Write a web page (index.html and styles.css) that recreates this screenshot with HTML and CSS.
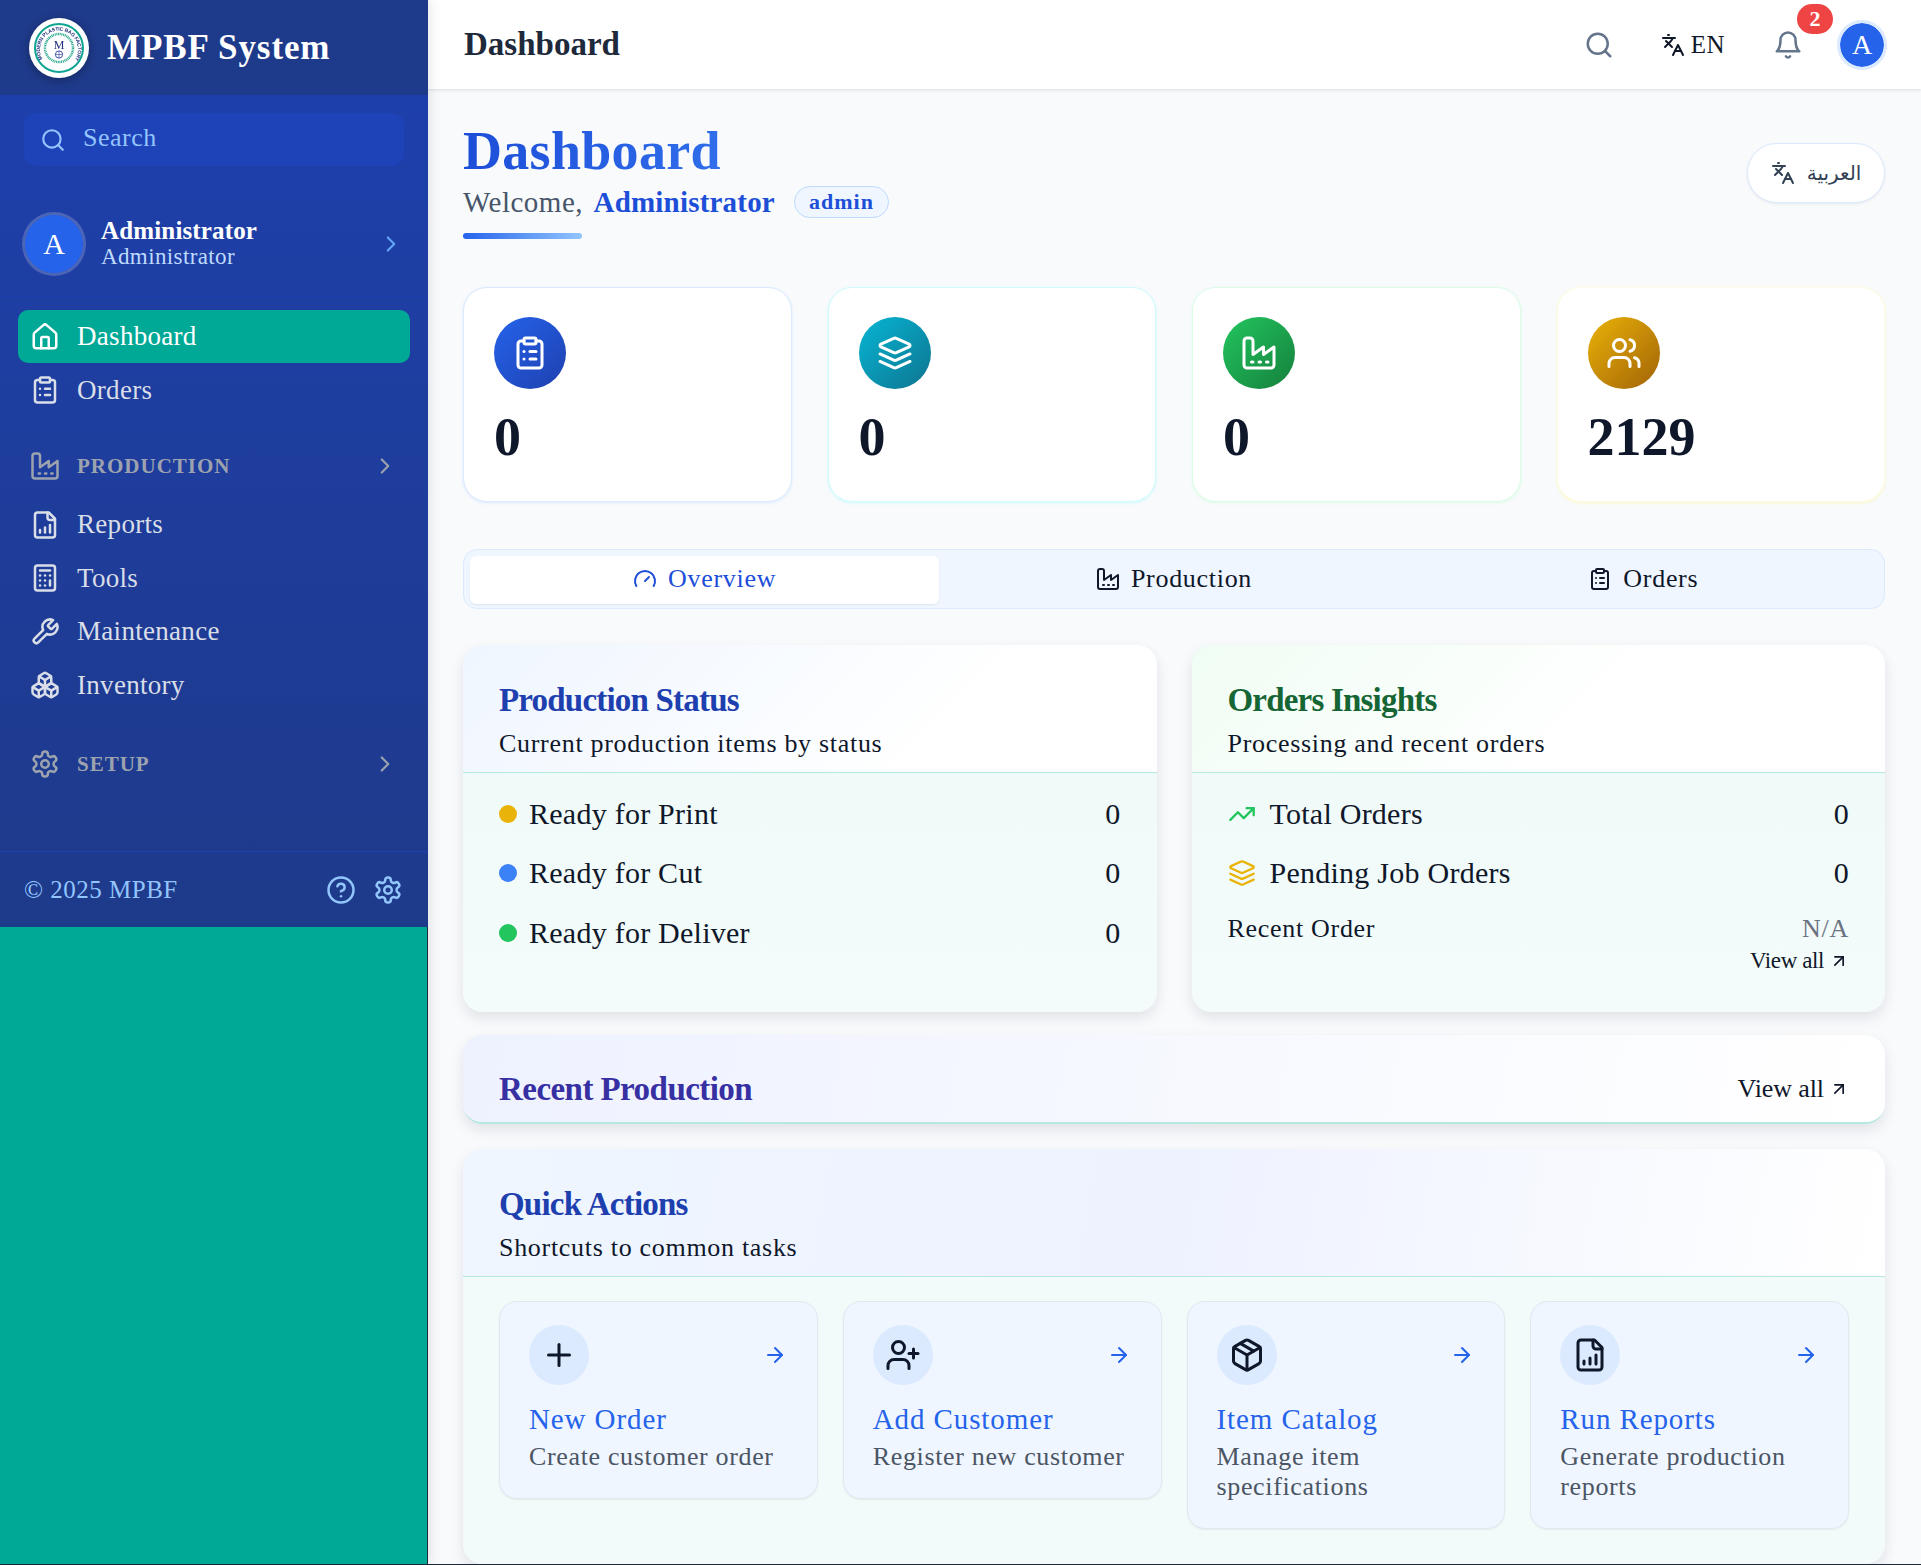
FILE: index.html
```html
<!DOCTYPE html>
<html lang="en">
<head>
  <meta charset="UTF-8">
  <title>Dashboard - MPBF System</title>
  <link rel="stylesheet" href="styles.css">
</head>
<body>
  <svg class="icon-defs" xmlns="http://www.w3.org/2000/svg">
    <symbol id="i-search" viewBox="0 0 24 24"><circle cx="11" cy="11" r="8"/><path d="m21 21-4.3-4.3"/></symbol>
    <symbol id="i-chevron" viewBox="0 0 24 24"><path d="m9 18 6-6-6-6"/></symbol>
    <symbol id="i-house" viewBox="0 0 24 24"><path d="M15 21v-8a1 1 0 0 0-1-1h-4a1 1 0 0 0-1 1v8"/><path d="M3 10a2 2 0 0 1 .709-1.528l7-5.999a2 2 0 0 1 2.582 0l7 5.999A2 2 0 0 1 21 10v9a2 2 0 0 1-2 2H5a2 2 0 0 1-2-2z"/></symbol>
    <symbol id="i-clipboard" viewBox="0 0 24 24"><rect width="8" height="4" x="8" y="2" rx="1" ry="1"/><path d="M16 4h2a2 2 0 0 1 2 2v14a2 2 0 0 1-2 2H6a2 2 0 0 1-2-2V6a2 2 0 0 1 2-2h2"/><path d="M12 11h4"/><path d="M12 16h4"/><path d="M8 11h.01"/><path d="M8 16h.01"/></symbol>
    <symbol id="i-factory" viewBox="0 0 24 24"><path d="M2 20a2 2 0 0 0 2 2h16a2 2 0 0 0 2-2V8l-7 5V8l-7 5V4a2 2 0 0 0-2-2H4a2 2 0 0 0-2 2Z"/><path d="M17 18h1"/><path d="M12 18h1"/><path d="M7 18h1"/></symbol>
    <symbol id="i-report" viewBox="0 0 24 24"><path d="M15 2H6a2 2 0 0 0-2 2v16a2 2 0 0 0 2 2h12a2 2 0 0 0 2-2V7Z"/><path d="M14 2v4a2 2 0 0 0 2 2h4"/><path d="M8 18v-2"/><path d="M12 18v-4"/><path d="M16 18v-6"/></symbol>
    <symbol id="i-calc" viewBox="0 0 24 24"><rect width="16" height="20" x="4" y="2" rx="2"/><path d="M8 6h8"/><path d="M16 14v4"/><path d="M16 10h.01"/><path d="M12 10h.01"/><path d="M8 10h.01"/><path d="M12 14h.01"/><path d="M8 14h.01"/><path d="M12 18h.01"/><path d="M8 18h.01"/></symbol>
    <symbol id="i-wrench" viewBox="0 0 24 24"><path d="M14.7 6.3a1 1 0 0 0 0 1.4l1.6 1.6a1 1 0 0 0 1.4 0l3.77-3.77a6 6 0 0 1-7.94 7.94l-6.91 6.91a2.12 2.12 0 0 1-3-3l6.91-6.91a6 6 0 0 1 7.94-7.94l-3.76 3.76z"/></symbol>
    <symbol id="i-boxes" viewBox="0 0 24 24"><path d="M2.97 12.92A2 2 0 0 0 2 14.63v3.24a2 2 0 0 0 .97 1.71l3 1.8a2 2 0 0 0 2.06 0L12 19v-5.5l-5-3-4.03 2.42Z"/><path d="m7 16.5-4.74-2.85"/><path d="m7 16.5 5-3"/><path d="M7 16.5v5.17"/><path d="M12 13.5V19l3.97 2.38a2 2 0 0 0 2.06 0l3-1.8a2 2 0 0 0 .97-1.71v-3.24a2 2 0 0 0-.97-1.71L17 10.5l-5 3Z"/><path d="m17 16.5-5-3"/><path d="m17 16.5 4.74-2.85"/><path d="M17 16.5v5.17"/><path d="M7.97 4.42A2 2 0 0 0 7 6.13v4.37l5 3 5-3V6.13a2 2 0 0 0-.97-1.71l-3-1.8a2 2 0 0 0-2.06 0l-3 1.8Z"/><path d="M12 8 7.26 5.15"/><path d="m12 8 4.74-2.85"/><path d="M12 13.5V8"/></symbol>
    <symbol id="i-settings" viewBox="0 0 24 24"><path d="M12.22 2h-.44a2 2 0 0 0-2 2v.18a2 2 0 0 1-1 1.73l-.43.25a2 2 0 0 1-2 0l-.15-.08a2 2 0 0 0-2.73.73l-.22.38a2 2 0 0 0 .73 2.73l.15.1a2 2 0 0 1 1 1.72v.51a2 2 0 0 1-1 1.74l-.15.09a2 2 0 0 0-.73 2.73l.22.38a2 2 0 0 0 2.73.73l.15-.08a2 2 0 0 1 2 0l.43.25a2 2 0 0 1 1 1.73V20a2 2 0 0 0 2 2h.44a2 2 0 0 0 2-2v-.18a2 2 0 0 1 1-1.73l.43-.25a2 2 0 0 1 2 0l.15.08a2 2 0 0 0 2.73-.73l.22-.39a2 2 0 0 0-.73-2.73l-.15-.08a2 2 0 0 1-1-1.74v-.5a2 2 0 0 1 1-1.74l.15-.09a2 2 0 0 0 .73-2.73l-.22-.38a2 2 0 0 0-2.73-.73l-.15.08a2 2 0 0 1-2 0l-.43-.25a2 2 0 0 1-1-1.73V4a2 2 0 0 0-2-2z"/><circle cx="12" cy="12" r="3"/></symbol>
    <symbol id="i-help" viewBox="0 0 24 24"><circle cx="12" cy="12" r="10"/><path d="M9.09 9a3 3 0 0 1 5.83 1c0 2-3 3-3 3"/><path d="M12 17h.01"/></symbol>
    <symbol id="i-lang" viewBox="0 0 24 24"><path d="m5 8 6 6"/><path d="m4 14 6-6 2-3"/><path d="M2 5h12"/><path d="M7 2h1"/><path d="m22 22-5-10-5 10"/><path d="M14 18h6"/></symbol>
    <symbol id="i-bell" viewBox="0 0 24 24"><path d="M6 8a6 6 0 0 1 12 0c0 7 3 9 3 9H3s3-2 3-9"/><path d="M10.3 21a1.94 1.94 0 0 0 3.4 0"/></symbol>
    <symbol id="i-layers" viewBox="0 0 24 24"><path d="m12.83 2.18a2 2 0 0 0-1.66 0L2.6 6.08a1 1 0 0 0 0 1.83l8.58 3.91a2 2 0 0 0 1.66 0l8.58-3.9a1 1 0 0 0 0-1.83Z"/><path d="m22 17.65-9.17 4.16a2 2 0 0 1-1.66 0L2 17.65"/><path d="m22 12.65-9.17 4.16a2 2 0 0 1-1.66 0L2 12.65"/></symbol>
    <symbol id="i-users" viewBox="0 0 24 24"><path d="M16 21v-2a4 4 0 0 0-4-4H6a4 4 0 0 0-4 4v2"/><circle cx="9" cy="7" r="4"/><path d="M22 21v-2a4 4 0 0 0-3-3.87"/><path d="M16 3.13a4 4 0 0 1 0 7.75"/></symbol>
    <symbol id="i-gauge" viewBox="0 0 24 24"><path d="m12 14 4-4"/><path d="M3.34 19a10 10 0 1 1 17.32 0"/></symbol>
    <symbol id="i-trend" viewBox="0 0 24 24"><path d="M22 7 13.5 15.5 8.5 10.5 2 17"/><path d="M16 7h6v6"/></symbol>
    <symbol id="i-upright" viewBox="0 0 24 24"><path d="M7 7h10v10"/><path d="M7 17 17 7"/></symbol>
    <symbol id="i-plus" viewBox="0 0 24 24"><path d="M5 12h14"/><path d="M12 5v14"/></symbol>
    <symbol id="i-userplus" viewBox="0 0 24 24"><path d="M16 21v-2a4 4 0 0 0-4-4H6a4 4 0 0 0-4 4v2"/><circle cx="9" cy="7" r="4"/><path d="M19 8v6"/><path d="M22 11h-6"/></symbol>
    <symbol id="i-package" viewBox="0 0 24 24"><path d="m7.5 4.27 9 5.15"/><path d="M21 8a2 2 0 0 0-1-1.73l-7-4a2 2 0 0 0-2 0l-7 4A2 2 0 0 0 3 8v8a2 2 0 0 0 1 1.73l7 4a2 2 0 0 0 2 0l7-4A2 2 0 0 0 21 16Z"/><path d="m3.3 7 8.7 5 8.7-5"/><path d="M12 22V12"/></symbol>
    <symbol id="i-arrow" viewBox="0 0 24 24"><path d="M5 12h14"/><path d="m12 5 7 7-7 7"/></symbol>
  </svg>

  <div class="app">
    <aside class="sidebar">
      <div class="sidebar-inner">
        <div class="brand">
          <svg class="logo" viewBox="0 0 60 60">
            <circle cx="30" cy="30" r="30" fill="#fff"/>
            <circle cx="30" cy="30" r="24" fill="none" stroke="#0fa593" stroke-width="2"/>
            <circle cx="30" cy="30" r="14" fill="none" stroke="#2aa98f" stroke-width="2.5" stroke-dasharray="1 .7"/>
            <defs><path id="logoArc" d="M13.5 41a19 19 0 1 1 33 0"/></defs>
            <text class="logo-ring"><textPath href="#logoArc" textLength="80" lengthAdjust="spacing">MODERN PLASTIC BAG FACTORY</textPath></text>
            <text class="logo-m" x="30" y="31" text-anchor="middle">M</text>
            <circle cx="30" cy="36.5" r="3.6" fill="none" stroke="#2c3e9e" stroke-width=".9"/>
            <path d="M26.4 36.5h7.2M30 32.9v7.2" stroke="#2c3e9e" stroke-width=".6"/>
          </svg>
          <span class="brand-name">MPBF System</span>
        </div>

        <div class="side-search">
          <svg class="ico ico-26"><use href="#i-search"/></svg>
          <span>Search</span>
        </div>

        <div class="side-user">
          <div class="side-avatar">A</div>
          <div class="side-user-text">
            <div class="side-user-name">Administrator</div>
            <div class="side-user-role">Administrator</div>
          </div>
          <svg class="ico ico-26 side-user-chev"><use href="#i-chevron"/></svg>
        </div>

        <nav class="side-nav">
          <a class="nav-item active"><svg class="ico ico-30"><use href="#i-house"/></svg>Dashboard</a>
          <a class="nav-item"><svg class="ico ico-30"><use href="#i-clipboard"/></svg>Orders</a>
          <a class="nav-item nav-group"><svg class="ico ico-30"><use href="#i-factory"/></svg><span>PRODUCTION</span><svg class="ico ico-26 nav-chev"><use href="#i-chevron"/></svg></a>
          <a class="nav-item"><svg class="ico ico-30"><use href="#i-report"/></svg>Reports</a>
          <a class="nav-item"><svg class="ico ico-30"><use href="#i-calc"/></svg>Tools</a>
          <a class="nav-item"><svg class="ico ico-30"><use href="#i-wrench"/></svg>Maintenance</a>
          <a class="nav-item"><svg class="ico ico-30"><use href="#i-boxes"/></svg>Inventory</a>
          <a class="nav-item nav-group"><svg class="ico ico-30"><use href="#i-settings"/></svg><span>SETUP</span><svg class="ico ico-26 nav-chev"><use href="#i-chevron"/></svg></a>
        </nav>

        <div class="side-foot">
          <span>© 2025 MPBF</span>
          <div class="side-foot-icons">
            <svg class="ico ico-30"><use href="#i-help"/></svg>
            <svg class="ico ico-30"><use href="#i-settings"/></svg>
          </div>
        </div>
      </div>
    </aside>

    <div class="main">
      <header class="topbar">
        <div class="topbar-title">Dashboard</div>
        <div class="topbar-right">
          <svg class="ico ico-30 top-search"><use href="#i-search"/></svg>
          <div class="top-lang"><svg class="ico ico-24"><use href="#i-lang"/></svg>EN</div>
          <div class="top-bell"><svg class="ico ico-30"><use href="#i-bell"/></svg><span class="bell-badge">2</span></div>
          <div class="top-avatar">A</div>
        </div>
      </header>

      <main class="content">
        <div class="page-head">
          <div>
            <h1 class="page-title">Dashboard</h1>
            <div class="welcome">Welcome, <b>Administrator</b><span class="role-badge">admin</span></div>
            <div class="title-bar"></div>
          </div>
          <button class="lang-pill"><svg class="ico ico-24"><use href="#i-lang"/></svg><span class="arabic">العربية</span></button>
        </div>

        <section class="stats">
          <div class="stat stat-blue"><div class="stat-icon"><svg class="ico ico-36"><use href="#i-clipboard"/></svg></div><div class="stat-value">0</div></div>
          <div class="stat stat-cyan"><div class="stat-icon"><svg class="ico ico-36"><use href="#i-layers"/></svg></div><div class="stat-value">0</div></div>
          <div class="stat stat-green"><div class="stat-icon"><svg class="ico ico-36"><use href="#i-factory"/></svg></div><div class="stat-value">0</div></div>
          <div class="stat stat-amber"><div class="stat-icon"><svg class="ico ico-36"><use href="#i-users"/></svg></div><div class="stat-value">2129</div></div>
        </section>

        <div class="tabs">
          <div class="tab active"><svg class="ico ico-24"><use href="#i-gauge"/></svg>Overview</div>
          <div class="tab"><svg class="ico ico-24"><use href="#i-factory"/></svg>Production</div>
          <div class="tab"><svg class="ico ico-24"><use href="#i-clipboard"/></svg>Orders</div>
        </div>

        <section class="two-col">
          <div class="card">
            <div class="card-head head-blue">
              <h3 class="card-title title-blue">Production Status</h3>
              <p class="card-sub">Current production items by status</p>
            </div>
            <div class="card-body">
              <div class="stat-row"><span class="row-label"><i class="dot dot-amber"></i>Ready for Print</span><span>0</span></div>
              <div class="stat-row"><span class="row-label"><i class="dot dot-blue"></i>Ready for Cut</span><span>0</span></div>
              <div class="stat-row"><span class="row-label"><i class="dot dot-green"></i>Ready for Deliver</span><span>0</span></div>
            </div>
          </div>

          <div class="card">
            <div class="card-head head-green">
              <h3 class="card-title title-green">Orders Insights</h3>
              <p class="card-sub">Processing and recent orders</p>
            </div>
            <div class="card-body">
              <div class="stat-row"><span class="row-label"><svg class="ico ico-28 c-green"><use href="#i-trend"/></svg>Total Orders</span><span>0</span></div>
              <div class="stat-row"><span class="row-label"><svg class="ico ico-28 c-amber"><use href="#i-layers"/></svg>Pending Job Orders</span><span>0</span></div>
              <div class="recent-row"><span>Recent Order</span><span class="muted">N/A</span></div>
              <div class="view-all view-small">View all <svg class="ico ico-20"><use href="#i-upright"/></svg></div>
            </div>
          </div>
        </section>

        <section class="card recent-card">
          <div class="recent-head">
            <h3 class="card-title title-indigo">Recent Production</h3>
            <div class="view-all">View all <svg class="ico ico-20"><use href="#i-upright"/></svg></div>
          </div>
        </section>

        <section class="card quick-card">
          <div class="card-head head-blue2">
            <h3 class="card-title title-blue">Quick Actions</h3>
            <p class="card-sub">Shortcuts to common tasks</p>
          </div>
          <div class="quick-body">
            <a class="quick">
              <div class="quick-top"><span class="quick-icon"><svg class="ico ico-36"><use href="#i-plus"/></svg></span><svg class="ico ico-24 quick-arrow"><use href="#i-arrow"/></svg></div>
              <div class="quick-title">New Order</div>
              <div class="quick-desc">Create customer order</div>
            </a>
            <a class="quick">
              <div class="quick-top"><span class="quick-icon"><svg class="ico ico-36"><use href="#i-userplus"/></svg></span><svg class="ico ico-24 quick-arrow"><use href="#i-arrow"/></svg></div>
              <div class="quick-title">Add Customer</div>
              <div class="quick-desc">Register new customer</div>
            </a>
            <a class="quick">
              <div class="quick-top"><span class="quick-icon"><svg class="ico ico-36"><use href="#i-package"/></svg></span><svg class="ico ico-24 quick-arrow"><use href="#i-arrow"/></svg></div>
              <div class="quick-title">Item Catalog</div>
              <div class="quick-desc">Manage item specifications</div>
            </a>
            <a class="quick">
              <div class="quick-top"><span class="quick-icon"><svg class="ico ico-36"><use href="#i-report"/></svg></span><svg class="ico ico-24 quick-arrow"><use href="#i-arrow"/></svg></div>
              <div class="quick-title">Run Reports</div>
              <div class="quick-desc">Generate production reports</div>
            </a>
          </div>
        </section>
      </main>
    </div>
  </div>
</body>
</html>
```

FILE: styles.css
```css
* {
  box-sizing: border-box;
}

html, body {
  margin: 0;
  height: 100%;
  overflow: hidden;
}

body {
  font-family: "Liberation Serif", "Noto Sans", serif;
  font-size: 26px;
  letter-spacing: 0.5px;
  color: #0f172a;
  background: #1f2937;
}

h1, h3, p {
  margin: 0;
}

.icon-defs {
  display: none;
}

.ico {
  fill: none;
  stroke: currentColor;
  stroke-width: 2;
  stroke-linecap: round;
  stroke-linejoin: round;
  flex: none;
}
.ico-20 { width: 20px; height: 20px; }
.ico-24 { width: 24px; height: 24px; }
.ico-26 { width: 26px; height: 26px; }
.ico-28 { width: 28px; height: 28px; }
.ico-30 { width: 30px; height: 30px; }
.ico-36 { width: 36px; height: 36px; }

.app {
  display: flex;
  height: 1564px;
  background: #f8fafc;
}

/* sidebar */
.sidebar {
  width: 428px;
  flex: none;
  background: #00a896;
  border-right: 1px solid #1f2937;
  box-shadow: 2px 0 12px rgba(0,0,0,0.1);
  z-index: 2;
}

.sidebar-inner {
  height: 927px;
  margin-right: -1px;
  display: flex;
  flex-direction: column;
  background: linear-gradient(180deg, #1e40af, #1e3a8a);
  color: #fff;
}

.brand {
  height: 95px;
  flex: none;
  display: flex;
  align-items: center;
  gap: 18px;
  padding: 0 29px;
  background: #1e3a8a;
}

.logo {
  width: 60px;
  height: 60px;
  filter: drop-shadow(0 2px 4px rgba(0,0,0,0.3));
}

.logo-ring {
  font-size: 5px;
  font-weight: bold;
  letter-spacing: 0;
  fill: #24307f;
  font-family: "Liberation Sans", sans-serif;
}

.logo-m {
  font-size: 12px;
  fill: #24307f;
  letter-spacing: 0;
}

.brand-name {
  font-size: 35px;
  font-weight: bold;
  letter-spacing: 0.9px;
}

.side-search {
  margin: 18px 24px 0;
  height: 53px;
  flex: none;
  display: flex;
  align-items: center;
  gap: 17px;
  padding: 0 16px;
  border-radius: 12px;
  background: #1e42b8;
  color: #93c5fd;
}

.side-search span {
  margin-top: -3px;
}

.side-user {
  height: 131px;
  flex: none;
  display: flex;
  align-items: center;
  padding: 25px 24px 0 22px;
  border-bottom: 1px solid #1e40af;
  gap: 15px;
}

.side-avatar {
  width: 64px;
  height: 64px;
  border-radius: 50%;
  background: #2563eb;
  border: 3px solid rgba(255,255,255,0.2);
  background-clip: padding-box;
  display: flex;
  align-items: center;
  justify-content: center;
  font-size: 30px;
  letter-spacing: 0;
}

.side-user-text {
  flex: 1;
}

.side-user-name {
  font-size: 25px;
  letter-spacing: 0.15px;
  font-weight: bold;
  line-height: 26px;
}

.side-user-role {
  font-size: 23px;
  letter-spacing: 0.38px;
  color: #bfdbfe;
  line-height: 25px;
}

.side-user-chev {
  color: #60a5fa;
}

.side-nav {
  flex: 1;
  padding: 13px 18px 0;
}

.nav-item {
  height: 53.4px;
  display: flex;
  align-items: center;
  gap: 17px;
  padding: 0 12px;
  border-radius: 10px;
  color: #d9dee8;
  font-size: 27px;
  letter-spacing: 0.3px;
}

.nav-item.active {
  background: #00a896;
  color: #fff;
}

.nav-group {
  color: #9ca3af;
  font-size: 21px;
  letter-spacing: 1px;
  font-weight: bold;
  margin: 23px 0 5px;
}

.nav-group:last-child {
  margin-top: 26px;
}

.nav-group .nav-chev {
  margin-left: auto;
  margin-right: 0;
}

.side-foot {
  height: 76px;
  flex: none;
  display: flex;
  align-items: center;
  justify-content: space-between;
  padding: 0 25px 0 24px;
  border-top: 1px solid #1e40af;
  color: #93c5fd;
  font-size: 25px;
}

.side-foot-icons {
  display: flex;
  gap: 17px;
}

/* main */
.main {
  flex: 1;
  min-width: 0;
  display: flex;
  flex-direction: column;
}

.topbar {
  height: 89px;
  flex: none;
  display: flex;
  align-items: center;
  justify-content: space-between;
  padding: 0 34px 0 36px;
  background: #fff;
  box-shadow: 0 1px 3px rgba(15,23,42,0.12);
  z-index: 1;
}

.topbar-title {
  font-size: 33px;
  font-weight: bold;
  letter-spacing: 0;
  color: #1e293b;
}

.topbar-right {
  display: flex;
  align-items: center;
}

.top-search {
  color: #64748b;
  margin-right: 47px;
}

.top-lang {
  display: flex;
  align-items: center;
  gap: 5.5px;
  margin-right: 48px;
  font-size: 25px;
}

.top-bell {
  position: relative;
  display: flex;
  color: #64748b;
  margin-right: 34px;
}

.bell-badge {
  position: absolute;
  left: 24px;
  top: -26px;
  width: 36px;
  height: 30px;
  border-radius: 15px;
  background: #ef4444;
  color: #fff;
  font-size: 22px;
  font-weight: bold;
  letter-spacing: 0;
  display: flex;
  align-items: center;
  justify-content: center;
}

.top-avatar {
  width: 50px;
  height: 50px;
  border-radius: 50%;
  background: #2563eb;
  border: 3px solid #dbeafe;
  background-clip: padding-box;
  color: #fff;
  font-size: 28px;
  letter-spacing: 0;
  display: flex;
  align-items: center;
  justify-content: center;
}

.content {
  flex: 1;
  min-height: 0;
  padding: 29px 36px 0 35px;
  overflow: hidden;
}

.page-head {
  display: flex;
  justify-content: space-between;
  align-items: flex-start;
  height: 169px;
}

.page-title {
  font-size: 54px;
  line-height: 66px;
  font-weight: bold;
  letter-spacing: 0.3px;
  background: linear-gradient(90deg, #1d4ed8, #3b82f6);
  -webkit-background-clip: text;
  background-clip: text;
  color: transparent;
}

.welcome {
  display: flex;
  align-items: center;
  font-size: 29px;
  color: #475569;
  height: 36px;
}

.welcome b {
  color: #1d4ed8;
  margin-left: 10.5px;
  letter-spacing: 0.2px;
}

.role-badge {
  margin-left: 19px;
  height: 32px;
  padding: 0 14px;
  display: flex;
  align-items: center;
  border-radius: 16px;
  border: 1px solid #bfdbfe;
  background: #eff6ff;
  color: #1d4ed8;
  font-size: 22px;
  letter-spacing: 1px;
  font-weight: bold;
}

.title-bar {
  width: 119px;
  height: 6px;
  border-radius: 3px;
  margin-top: 13px;
  background: linear-gradient(90deg, #2563eb, #93c5fd);
}

.lang-pill {
  margin-top: 25px;
  width: 138px;
  height: 60px;
  border-radius: 30px;
  border: 1px solid #dbeafe;
  background: #fff;
  color: #334155;
  display: flex;
  align-items: center;
  justify-content: center;
  gap: 12px;
  box-shadow: 0 1px 3px rgba(15,23,42,0.08);
  font-size: 20px;
}

.arabic {
  font-family: "DejaVu Sans", "Noto Sans", sans-serif;
  letter-spacing: 0;
}

.stats {
  display: grid;
  grid-template-columns: repeat(4, 1fr);
  gap: 36px;
}

.stat {
  height: 215px;
  padding: 29px 30px;
  border-radius: 24px;
  background: #fff;
  border: 1px solid #dbeafe;
  box-shadow: 0 1px 3px #dbeafe;
}

.stat-cyan { border-color: #cffafe; box-shadow: 0 1px 3px #cffafe; }
.stat-green { border-color: #dcfce7; box-shadow: 0 1px 3px #dcfce7; }
.stat-amber { border-color: #fefce8; box-shadow: 0 1px 3px #fef9c3; }

.stat-icon {
  width: 72px;
  height: 72px;
  border-radius: 50%;
  display: flex;
  align-items: center;
  justify-content: center;
  color: #fff;
}

.stat-blue .stat-icon { background: linear-gradient(135deg, #2563eb, #1e40af); }
.stat-cyan .stat-icon { background: linear-gradient(135deg, #06b6d4, #0e7490); }
.stat-green .stat-icon { background: linear-gradient(135deg, #22c55e, #15803d); }
.stat-amber .stat-icon { background: linear-gradient(135deg, #eab308, #a16207); }

.stat-value {
  font-size: 54px;
  font-weight: bold;
  line-height: 68px;
  margin-top: 14px;
  letter-spacing: 0;
}

.tabs {
  margin-top: 47px;
  height: 60px;
  padding: 6px 6px 4px;
  display: grid;
  grid-template-columns: repeat(3, 1fr);
  border-radius: 14px;
  border: 1px solid #dbeafe;
  background: #eff6ff;
}

.tab {
  display: flex;
  align-items: center;
  justify-content: center;
  gap: 11px;
  padding-bottom: 2px;
  border-radius: 6px;
  letter-spacing: 0.7px;
}

.tab.active {
  background: #fff;
  color: #1d4ed8;
  box-shadow: 0 1px 2px rgba(15,23,42,0.08);
}

.two-col {
  margin-top: 36px;
  display: grid;
  grid-template-columns: repeat(2, 1fr);
  gap: 35px;
}

.card {
  border-radius: 20px;
  overflow: hidden;
  background: #f2faf9;
  box-shadow: 0 6px 14px rgba(15,23,42,0.1);
}

.two-col .card {
  height: 367px;
}

.card-head {
  height: 128px;
  padding: 35px 36px 0;
  border-bottom: 1px solid #b5e9df;
}

.head-blue { background: linear-gradient(135deg, #eff6ff, #fff 70%); }
.head-green { background: linear-gradient(135deg, #f0fdf4, #fff 60%); }
.head-blue2 { background: linear-gradient(100deg, #eff6ff, #eef2ff 50%, #fff); }

.card-title {
  font-size: 33px;
  line-height: 40px;
  font-weight: bold;
  letter-spacing: -0.8px;
}

.title-blue { color: #1e40af; }
.title-green { color: #166534; }
.title-indigo { color: #3730a3; letter-spacing: -0.55px; }

.card-sub {
  line-height: 30px;
  margin-top: 9px;
  letter-spacing: 0.7px;
}

.card-body {
  padding: 11px 36px 0;
  background: linear-gradient(180deg, #f0faf8, #f3fcfa);
  height: 239px;
}

.stat-row {
  height: 59.5px;
  display: flex;
  align-items: center;
  justify-content: space-between;
  font-size: 30px;
  letter-spacing: 0.25px;
}

.row-label {
  display: flex;
  align-items: center;
}

.dot {
  width: 18px;
  height: 18px;
  border-radius: 50%;
  margin-right: 12px;
}

.dot-amber { background: #eab308; }
.dot-blue { background: #3b82f6; }
.dot-green { background: #22c55e; }

.c-green { color: #22c55e; margin-right: 14px; }
.c-amber { color: #eab308; margin-right: 14px; }

.recent-row {
  display: flex;
  justify-content: space-between;
  margin-top: 11px;
  line-height: 30px;
  letter-spacing: 0.7px;
}

.muted {
  color: #6b7280;
}

.view-all {
  display: flex;
  align-items: center;
  justify-content: flex-end;
  gap: 5px;
  letter-spacing: -0.1px;
}

.view-small {
  font-size: 23px;
  letter-spacing: -0.4px;
  line-height: 30px;
  margin-top: 2px;
}

.recent-card {
  margin-top: 23px;
  height: 89px;
  border-bottom: 2px solid #b5e9df;
}

.recent-head {
  height: 100%;
  padding: 20px 36px 0;
  display: flex;
  justify-content: space-between;
  align-items: center;
  background: linear-gradient(100deg, #eef2ff, #fff);
}

.quick-card {
  margin-top: 25px;
  height: 415px;
}

.quick-body {
  padding: 24px 36px 0;
  display: grid;
  grid-template-columns: repeat(4, 1fr);
  gap: 25px;
  align-items: start;
  background: #f2fbf9;
  height: 100%;
}

.quick {
  padding: 23px 30px 26px 29px;
  border-radius: 18px;
  background: #eff6ff;
  border: 1px solid #e2e8f0;
  box-shadow: 0 1px 2px rgba(15,23,42,0.06);
}

.quick-top {
  display: flex;
  align-items: center;
  justify-content: space-between;
}

.quick-icon {
  width: 60px;
  height: 60px;
  border-radius: 50%;
  background: #dbeafe;
  display: flex;
  align-items: center;
  justify-content: center;
}

.quick-arrow {
  color: #2563eb;
}

.quick-title {
  margin-top: 16px;
  font-size: 29px;
  line-height: 36px;
  letter-spacing: 0.9px;
  color: #2563eb;
}

.quick-desc {
  margin-top: 5px;
  line-height: 30px;
  letter-spacing: 0.65px;
  color: #4b5563;
}
```
